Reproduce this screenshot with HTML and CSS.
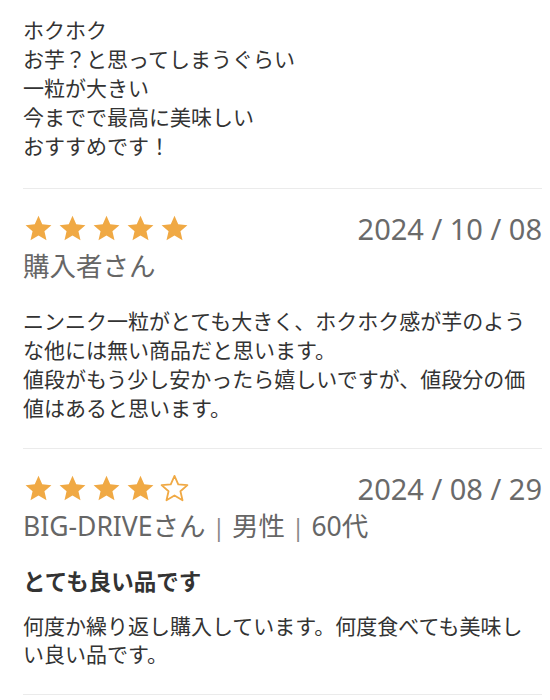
FILE: index.html
```html
<!DOCTYPE html>
<html lang="ja">
<head>
  <meta charset="UTF-8" />
  <title>レビュー</title>
  <meta name="viewport" content="width=device-width, initial-scale=1.0" />
  <link rel="stylesheet" href="styles.css">
</head>
<body>

<!-- previous review (cut off at top) -->
<div class="review first">
  <p class="review-body">ホクホク<br>お芋？と思ってしまうぐらい<br>一粒が大きい<br>今までで最高に美味しい<br>おすすめです！</p>
</div>

<div class="review">
  <div class="review-head">
    <div class="stars">
      <svg viewBox="0 0 24 24"><path class="on" d="M12 2.2l2.9 6.6 7.1.6-5.4 4.7 1.6 7-6.2-3.7-6.2 3.7 1.6-7L2 9.4l7.1-.6z"/></svg>
      <svg viewBox="0 0 24 24"><path class="on" d="M12 2.2l2.9 6.6 7.1.6-5.4 4.7 1.6 7-6.2-3.7-6.2 3.7 1.6-7L2 9.4l7.1-.6z"/></svg>
      <svg viewBox="0 0 24 24"><path class="on" d="M12 2.2l2.9 6.6 7.1.6-5.4 4.7 1.6 7-6.2-3.7-6.2 3.7 1.6-7L2 9.4l7.1-.6z"/></svg>
      <svg viewBox="0 0 24 24"><path class="on" d="M12 2.2l2.9 6.6 7.1.6-5.4 4.7 1.6 7-6.2-3.7-6.2 3.7 1.6-7L2 9.4l7.1-.6z"/></svg>
      <svg viewBox="0 0 24 24"><path class="on" d="M12 2.2l2.9 6.6 7.1.6-5.4 4.7 1.6 7-6.2-3.7-6.2 3.7 1.6-7L2 9.4l7.1-.6z"/></svg>
    </div>
    <span class="date">2024 / 10 / 08</span>
  </div>
  <div class="reviewer">購入者さん</div>
  <p class="review-body spaced">ニンニク一粒がとても大きく、ホクホク感が芋のような他には無い商品だと思います。<br>値段がもう少し安かったら嬉しいですが、値段分の価値はあると思います。</p>
</div>

<div class="review last">
  <div class="review-head">
    <div class="stars">
      <svg viewBox="0 0 24 24"><path class="on" d="M12 2.2l2.9 6.6 7.1.6-5.4 4.7 1.6 7-6.2-3.7-6.2 3.7 1.6-7L2 9.4l7.1-.6z"/></svg>
      <svg viewBox="0 0 24 24"><path class="on" d="M12 2.2l2.9 6.6 7.1.6-5.4 4.7 1.6 7-6.2-3.7-6.2 3.7 1.6-7L2 9.4l7.1-.6z"/></svg>
      <svg viewBox="0 0 24 24"><path class="on" d="M12 2.2l2.9 6.6 7.1.6-5.4 4.7 1.6 7-6.2-3.7-6.2 3.7 1.6-7L2 9.4l7.1-.6z"/></svg>
      <svg viewBox="0 0 24 24"><path class="on" d="M12 2.2l2.9 6.6 7.1.6-5.4 4.7 1.6 7-6.2-3.7-6.2 3.7 1.6-7L2 9.4l7.1-.6z"/></svg>
      <svg viewBox="0 0 24 24"><path class="off" d="M12 2.2l2.9 6.6 7.1.6-5.4 4.7 1.6 7-6.2-3.7-6.2 3.7 1.6-7L2 9.4l7.1-.6z"/></svg>
    </div>
    <span class="date">2024 / 08 / 29</span>
  </div>
  <div class="reviewer">BIG-DRIVEさん <span class="sep">|</span> 男性 <span class="sep">|</span> 60代</div>
  <h3 class="review-title">とても良い品です</h3>
  <p class="review-body tight">何度か繰り返し購入しています。何度食べても美味しい良い品です。</p>
</div>

</body>
</html>
```

FILE: styles.css
```css
* {
  margin: 0; padding: 0; box-sizing: border-box;
}

body {
  background: #fff;
  padding: 0 8px 0 23px;
  font-family: "Noto Sans", "Noto Sans CJK JP", sans-serif;
  color: #333;
}

.review {
  border-bottom: 1px solid #ebebeb;
  padding-bottom: 25px;
}

.review.first {
  padding-top: 16px;
  padding-bottom: 27px;
}

.review.last { padding-bottom: 26px; }

.review-body {
  font-size: 21px;
  line-height: 29px;
}

.review-body.spaced { margin-top: 23px; }

.review-body.tight { margin-top: 15px; line-height: 28px; }

.review-head {
  display: flex;
  justify-content: space-between;
  align-items: center;
  height: 40px;
  margin-top: 19px;
}

.stars {
  display: flex;
  gap: 3px;
}

.stars svg {
  width: 31px;
  height: 31px;
}

.stars .on { fill: #f0a944; }

.stars .off {
  fill: none;
  stroke: #f0a944;
  stroke-width: 1.4;
  stroke-linejoin: round;
}

.date {
  font-size: 29px;
  color: #6a6a6a;
}

.reviewer {
  font-size: 26.5px;
  line-height: 36px;
  color: #666;
}

.reviewer .sep {
  color: #888;
  font-size: 23px;
}

.review-title {
  font-size: 22.5px;
  line-height: 30px;
  font-weight: bold;
  color: #333;
  margin-top: 22px;
}
```
